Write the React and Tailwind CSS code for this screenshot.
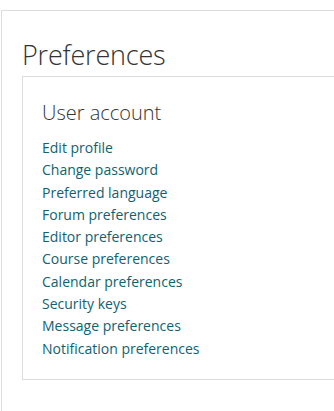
const links = [
  "Edit profile",
  "Change password",
  "Preferred language",
  "Forum preferences",
  "Editor preferences",
  "Course preferences",
  "Calendar preferences",
  "Security keys",
  "Message preferences",
  "Notification preferences",
];

export default function App() {
  return (
    <div className="h-[411px] w-[334px] overflow-hidden bg-white font-['Open_Sans',sans-serif]">
      <div className="ml-px mt-[10px] w-[400px] h-[420px] border border-[#dcdcdc] pl-[20px] pt-[24px]">
        <h1 className="text-[27px] leading-[40px] font-light text-[#333] tracking-[-0.2px]">Preferences</h1>
        <div className="mt-[1px] h-[304px] border border-[#dcdcdc] pl-[19px] pt-[20px]">
          <h2 className="text-[20px] leading-[32px] font-light text-[#333]">User account</h2>
          <ul className="mt-[8px]">
            {links.map((l) => (
              <li key={l} className="text-[14px] leading-[22.3px] text-[#0f6270]">
                <a href="#">{l}</a>
              </li>
            ))}
          </ul>
        </div>
      </div>
    </div>
  );
}
